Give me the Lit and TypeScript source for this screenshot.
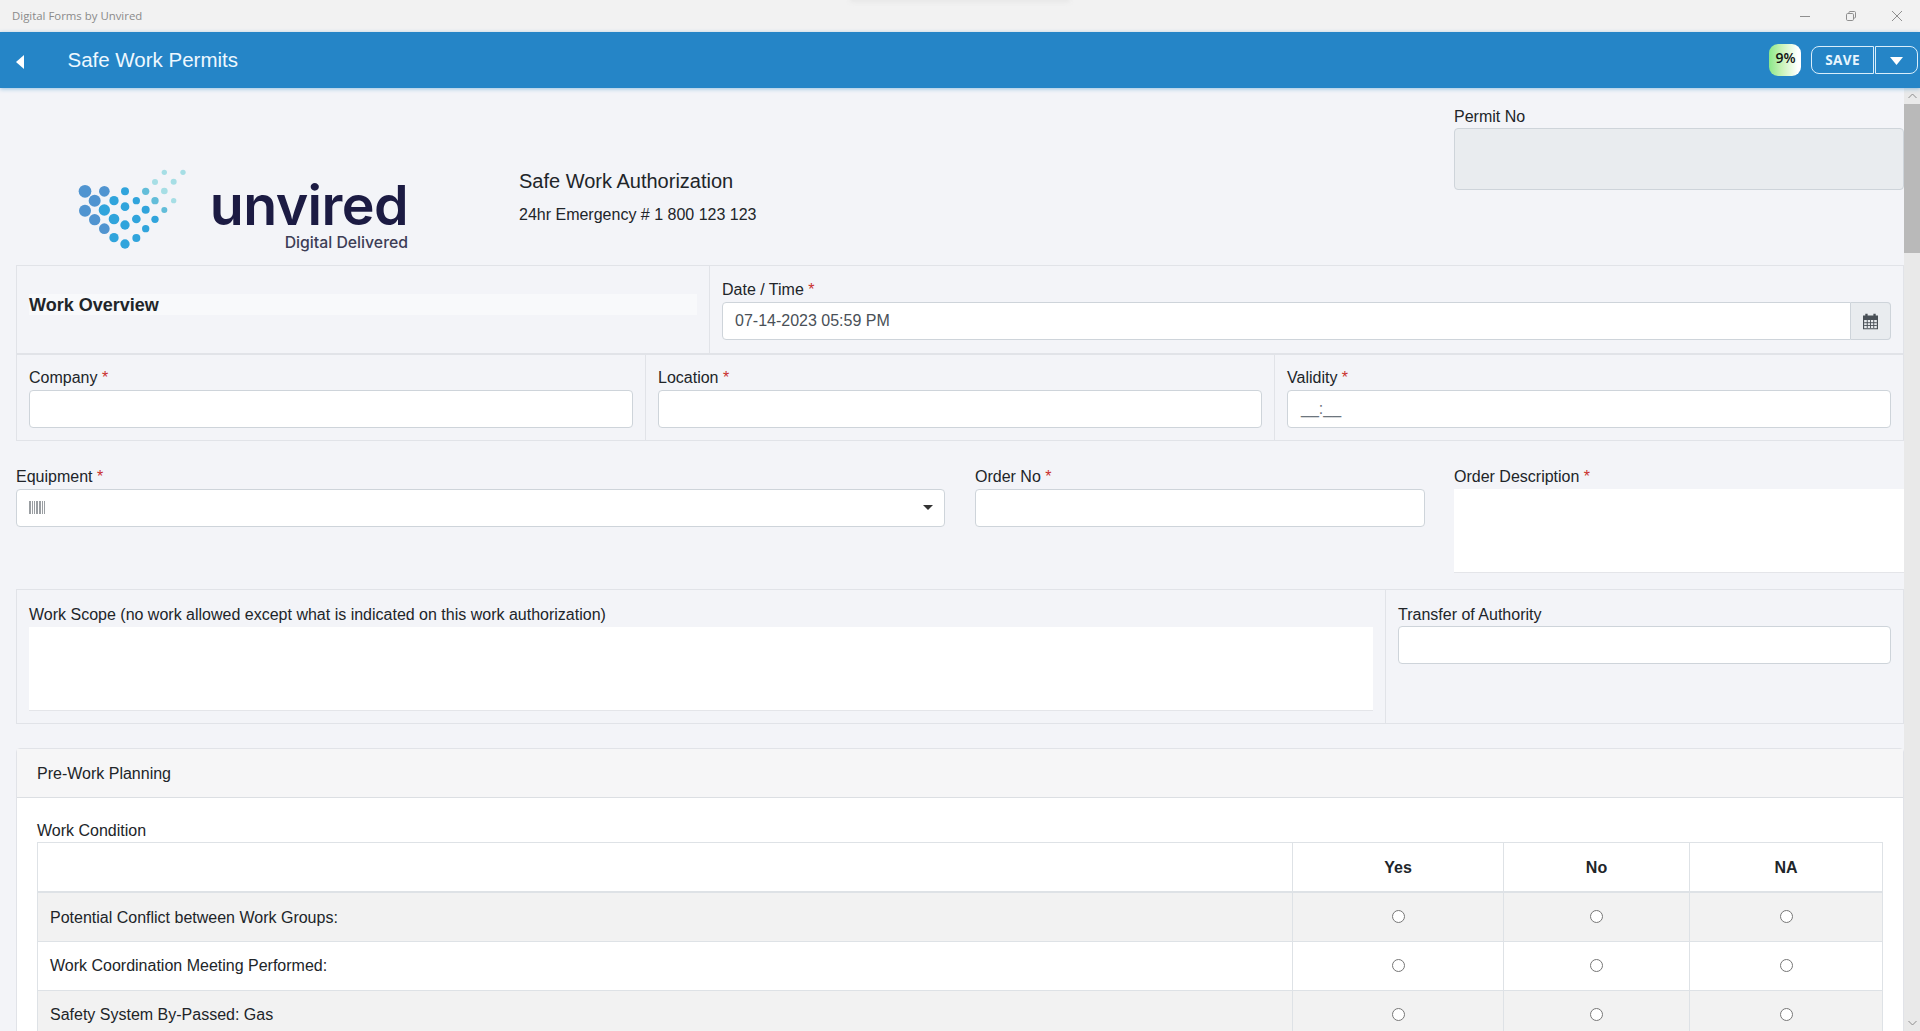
import { LitElement, html, css, svg } from "lit";
import { customElement } from "lit/decorators.js";

const BLUE1 = "#5094d0";
const BLUE2 = "#30a4dc";
const TEAL = "#62bdd9";
const PALE = "#a6dee5";
const DOTS: [number, number, number, string][] = [
  [104, 121, 19, BLUE1], [162, 121, 16, BLUE1], [133, 149, 18, BLUE1], [191, 149, 14, BLUE2],
  [224, 121, 12, BLUE2], [258, 149, 11, BLUE2], [286, 121, 11, TEAL], [314, 149, 11, TEAL],
  [342, 120, 10, PALE], [370, 149, 8, PALE], [314, 93, 9, PALE], [370, 92, 9, PALE],
  [342, 64, 8, PALE], [398, 64, 8, PALE],
  [104, 179, 18, BLUE1], [162, 177, 17, BLUE2], [224, 167, 13, BLUE2], [286, 176, 12, BLUE2],
  [342, 177, 9, TEAL], [133, 206, 17, BLUE1], [191, 204, 16, BLUE2], [258, 204, 13, BLUE2],
  [314, 205, 11, BLUE2], [162, 233, 16, BLUE1], [224, 222, 14, BLUE2], [286, 233, 11, BLUE2],
  [191, 260, 14, BLUE2], [258, 261, 12, BLUE2], [224, 279, 14, BLUE2],
];

const ROWS = [
  "Potential Conflict between Work Groups:",
  "Work Coordination Meeting Performed:",
  "Safety System By-Passed: Gas",
];

@customElement("app-root")
export class AppRoot extends LitElement {
  static styles = css`
    :host {
      display: flex;
      flex-direction: column;
      height: 100vh;
      overflow: hidden;
      font-family: "Liberation Sans", Arial, sans-serif;
      font-size: 16px;
      line-height: 24px;
      color: #212529;
      background: #f3f4f8;
    }
    * { box-sizing: border-box; }

    .titlebar {
      position: relative;
      flex: none;
      height: 32px;
      display: flex;
      align-items: center;
      justify-content: space-between;
      padding: 0 12px;
      background: #f2f2f2;
      font-family: "Open Sans", sans-serif;
      font-size: 11.4px;
      color: #8a8a8a;
    }
    .smudge {
      position: absolute;
      top: -3px;
      left: 850px;
      width: 220px;
      height: 5px;
      border-radius: 4px;
      background: #e6e6e6;
      filter: blur(2px);
    }
    .winctl { display: flex; align-items: center; gap: 32px; margin-right: 4px; }
    .winctl svg { display: block; width: 14px; height: 14px; fill: none; stroke: #8f8f8f; stroke-width: 1; }

    .appbar {
      position: relative;
      z-index: 1;
      flex: none;
      height: 56px;
      display: flex;
      align-items: center;
      padding: 0 2px 0 16px;
      background: #2585c7;
      color: #fff;
      box-shadow: 0 1px 4px rgba(37, 133, 199, 0.45);
    }
    .back { width: 52px; display: flex; padding-top: 3px; }
    .back svg { width: 8px; height: 14px; fill: #fff; }
    .apptitle { flex: 1; font-size: 20.5px; color: #eef8ff; margin-left: -0.5px; }
    .badge {
      width: 32px;
      height: 32px;
      margin-right: 10px;
      border-radius: 9px;
      display: flex;
      align-items: center;
      justify-content: center;
      padding: 0 0 4px 1px;
      font-family: "Open Sans", sans-serif;
      font-size: 14px;
      font-weight: 600;
      color: #111;
      background: linear-gradient(90deg, #8ce88a 0%, #c9f3b8 40%, #ffffff 90%);
    }
    .btn {
      height: 28px;
      border: 1px solid #d8eefb;
      display: flex;
      align-items: center;
      justify-content: center;
      font-family: "Open Sans", sans-serif;
      font-size: 13.5px;
      font-weight: 700;
      letter-spacing: 0.4px;
      color: #e8f5fd;
    }
    .save { width: 63px; border-radius: 8px 0 0 8px; margin-right: 1px; }
    .drop { width: 43px; border-radius: 0 8px 8px 0; }
    .drop svg { width: 13px; height: 8px; fill: #fff; margin-top: 2px; }

    .view { flex: 1; min-height: 0; display: flex; }
    .main { flex: 1; min-width: 0; padding-left: 16px; overflow: hidden; }
    .scrollbar {
      flex: none;
      width: 16px;
      display: flex;
      flex-direction: column;
      background: #e9e9e9;
    }
    .arrow { flex: none; height: 16px; display: flex; align-items: center; justify-content: center; }
    .arrow svg { width: 9px; height: 6px; fill: none; stroke: #8c8c8c; }
    .thumb { flex: none; height: 149px; background: #b9b9b9; }
    .spacer { flex: 1; }

    label, .label { display: block; height: 25px; line-height: 24px; padding-top: 1px; }
    .req { color: #c9302c; }
    .control {
      height: 38px;
      background: #fff;
      border: 1px solid #ced4da;
      border-radius: 4px;
      display: flex;
      align-items: center;
      padding: 0 12px;
      color: #495057;
    }

    .head { height: 177px; display: flex; padding-top: 16px; }
    .logo { width: 503px; padding: 58px 0 0 51px; flex: none; }
    .logo-inner { display: flex; align-items: flex-start; }
    .logo svg { width: 140px; height: 100px; flex: none; margin-top: -1px; }
    .wordmark { margin: 18px 0 0 1px; width: 200px; text-align: right; color: #1c1b43; font-family: Inter, sans-serif; }
    .wordmark b { display: block; font-size: 55.5px; line-height: 50px; font-weight: 600; letter-spacing: -0.6px; }
    .wordmark span { display: block; font-size: 15.8px; line-height: 20px; font-weight: 500; color: #3d3d56; margin-top: 3px; }
    .authz { flex: 1; padding-top: 65px; }
    .authz h2 { margin: 0; font-size: 20px; font-weight: 400; line-height: 24px; }
    .authz p { margin: 10px 0 0; line-height: 24px; }
    .permit { width: 450px; flex: none; }
    .permit label { height: 24px; }
    .permit .control { height: 62px; background: #e9ecef; }

    .box { border: 1px solid #e1e3e8; border-right-width: 1px; }
    .r1 { display: grid; grid-template-columns: 692px 1fr; height: 88px; border-bottom: 0; }
    .r2 { display: grid; grid-template-columns: 628px 629px 1fr; height: 88px; border-top: 2px solid #e1e3e8; }
    .cell { padding: 11px 12px 0; min-width: 0; }
    .cell + .cell { border-left: 1px solid #e1e3e8; }
    .r2 .cell { padding-top: 10px; padding-right: 12px; }
    .overview { display: flex; align-items: flex-start; padding-top: 28px; }
    .overview div { flex: 1; height: 21px; line-height: 21px; padding-top: 1px; background: #f8f9fb; font-size: 18px; font-weight: 700; }
    .group { display: flex; }
    .group .control { flex: 1; border-radius: 4px 0 0 4px; }
    .addon {
      width: 40px;
      height: 38px;
      border: 1px solid #ced4da;
      border-left: 0;
      border-radius: 0 4px 4px 0;
      background: #e9ecef;
      display: flex;
      align-items: center;
      justify-content: center;
    }
    .addon svg { width: 15px; height: 17px; }
    .mask { color: #6c757d; font-size: 16px; margin-left: 1px; }

    .r3 { display: grid; grid-template-columns: 929px 30px 450px 29px 450px; margin-top: 23px; height: 125px; }
    .r3 > div:nth-child(2), .r3 > div:nth-child(4) { visibility: hidden; }
    .selectc { justify-content: space-between; padding-right: 11px; }
    .barcode { display: flex; height: 13px; gap: 1px; opacity: 0.55; margin-top: -2px; }
    .barcode i { display: block; height: 100%; background: #495057; }
    .caret { width: 10px; height: 5px; fill: #333; display: block; margin-top: -2px; }
    .textarea { background: #fff; border-bottom: 1px solid #e4e5e9; }
    .desc { height: 84px; }

    .r4 { display: grid; grid-template-columns: 1368px 1fr; height: 135px; margin-top: 0; }
    .r4 .cell { padding-top: 12px; }
    .r4 .wide { height: 84px; }
    .r4 .tight { height: 24px; }

    .panel {
      margin-top: 24px;
      background: #fff;
      border: 1px solid #e1e3e8;
      border-radius: 4px 4px 0 0;
    }
    .panel-h {
      height: 49px;
      padding: 2px 20px 0;
      display: flex;
      align-items: center;
      background: #f6f6f7;
      border-bottom: 1px solid #dcdfe3;
    }
    .panel-b { padding: 20px 20px 0; }
    .panel-b .label { height: 24px; }
    table { width: 100%; border-collapse: collapse; table-layout: fixed; }
    th, td { border: 1px solid #dee2e6; height: 49px; padding: 0 12px; text-align: center; font-size: 16px; }
    th { font-weight: 700; border-bottom-width: 2px; padding-top: 2px; }
    td:first-child, th:first-child { text-align: left; }
    tbody tr:first-child td { height: 50px; }
    tbody tr:first-child td:first-child { padding-top: 3px; }
    tbody tr:not(:first-child) td { padding-bottom: 1px; }
    .c1 { width: 1255px; }
    .c2 { width: 211px; }
    .c3 { width: 186px; }
    tbody tr:nth-child(odd) { background: #f2f2f2; }
    input[type="radio"] { width: 13px; height: 13px; display: block; margin: 0 auto; }
  `;

  private star() {
    return html` <span class="req">*</span>`;
  }

  render() {
    return html`
      <div class="titlebar">
        <span class="smudge"></span>
        <span>Digital Forms by Unvired</span>
        <div class="winctl">
          <svg viewBox="0 0 14 14"><path d="M2 7.5h10" /></svg>
          <svg viewBox="0 0 14 14"><rect x="2.5" y="4.5" width="7" height="7" rx="1.2" /><path d="M5 4.5V3.4c0-.6.4-.9.9-.9h4.6c.6 0 1 .4 1 1v4.6c0 .5-.3.9-.9.9H9.5" /></svg>
          <svg viewBox="0 0 14 14"><path d="M2 2l10 10M12 2L2 12" /></svg>
        </div>
      </div>

      <div class="appbar">
        <div class="back"><svg viewBox="0 0 8 14"><path d="M8 0v14L0 7z" /></svg></div>
        <div class="apptitle">Safe Work Permits</div>
        <div class="badge">9%</div>
        <div class="btn save">SAVE</div>
        <div class="btn drop"><svg viewBox="0 0 13 8"><path d="M0 0h13L6.5 8z" /></svg></div>
      </div>

      <div class="view">
        <div class="main">
          <div class="head">
            <div class="logo">
              <div class="logo-inner">
                <svg viewBox="50 30 420 300">
                  ${DOTS.map(([x, y, r, c]) => svg`<circle cx=${x} cy=${y} r=${r} fill=${c} />`)}
                </svg>
                <div class="wordmark"><b>unvired</b><span>Digital Delivered</span></div>
              </div>
            </div>
            <div class="authz">
              <h2>Safe Work Authorization</h2>
              <p>24hr Emergency # 1 800 123 123</p>
            </div>
            <div class="permit">
              <label>Permit No</label>
              <div class="control"></div>
            </div>
          </div>

          <div class="box r1">
            <div class="cell overview"><div>Work Overview</div></div>
            <div class="cell">
              <label>Date / Time${this.star()}</label>
              <div class="group">
                <div class="control">07-14-2023 05:59 PM</div>
                <div class="addon">
                  <svg viewBox="1 1.5 13 13.5">
                    <path fill="#495057" d="M1 3h2V1.5h2V3h5V1.5h2V3h2v12H1zM2 7v7h11V7z" />
                    <path stroke="#495057" fill="none" stroke-width=".8" d="M2 9.3h11M2 11.7h11M4.7 7v7M7.5 7v7M10.3 7v7" />
                  </svg>
                </div>
              </div>
            </div>
          </div>

          <div class="box r2">
            <div class="cell"><label>Company${this.star()}</label><div class="control"></div></div>
            <div class="cell"><label>Location${this.star()}</label><div class="control"></div></div>
            <div class="cell"><label>Validity${this.star()}</label><div class="control"><span class="mask">__:__</span></div></div>
          </div>

          <div class="r3">
            <div>
              <label>Equipment${this.star()}</label>
              <div class="control selectc">
                <div class="barcode">
                  ${[2, 1, 1, 2, 2, 1, 1].map((w) => html`<i style="width:${w}px"></i>`)}
                </div>
                <svg class="caret" viewBox="0 0 10 5"><path d="M0 0h10L5 5z" /></svg>
              </div>
            </div>
            <div></div>
            <div><label>Order No${this.star()}</label><div class="control"></div></div>
            <div></div>
            <div><label>Order Description${this.star()}</label><div class="textarea desc"></div></div>
          </div>

          <div class="box r4">
            <div class="cell">
              <label>Work Scope (no work allowed except what is indicated on this work authorization)</label>
              <div class="textarea wide"></div>
            </div>
            <div class="cell">
              <label class="tight">Transfer of Authority</label>
              <div class="control"></div>
            </div>
          </div>

          <div class="panel">
            <div class="panel-h">Pre-Work Planning</div>
            <div class="panel-b">
              <div class="label">Work Condition</div>
              <table>
                <colgroup><col class="c1" /><col class="c2" /><col class="c3" /><col /></colgroup>
                <thead><tr><th></th><th>Yes</th><th>No</th><th>NA</th></tr></thead>
                <tbody>
                  ${ROWS.map(
                    (r, i) => html`<tr>
                      <td>${r}</td>
                      <td><input type="radio" name="r${i}" /></td>
                      <td><input type="radio" name="r${i}" /></td>
                      <td><input type="radio" name="r${i}" /></td>
                    </tr>`
                  )}
                </tbody>
              </table>
            </div>
          </div>
        </div>

        <div class="scrollbar">
          <div class="arrow"><svg viewBox="0 0 9 6"><path d="M.5 5l4-4 4 4" /></svg></div>
          <div class="thumb"></div>
          <div class="spacer"></div>
          <div class="arrow"><svg viewBox="0 0 9 6"><path d="M.5 1l4 4 4-4" /></svg></div>
        </div>
      </div>
    `;
  }
}
